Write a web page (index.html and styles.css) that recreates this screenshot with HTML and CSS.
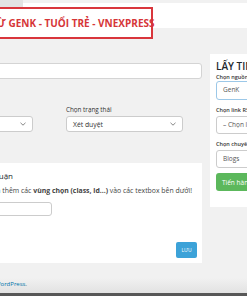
FILE: index.html
```html
<!DOCTYPE html>
<html lang="vi">
<head>
    <meta charset="UTF-8">
    <meta name="viewport" content="width=device-width, initial-scale=1.0">
    <title>Lấy tin tự động</title>
    <link rel="stylesheet" href="styles.css">
</head>
<body>
    <!-- Page title -->
    <div class="page-head">
        <div class="tab"></div>
        <h1 class="notice">LẤY TIN TỪ GENK - TUỔI TRẺ - VNEXPRESS</h1>
    </div>

    <div class="columns">
        <!-- Main column -->
        <div class="main-col">
            <input type="text" class="search-input">

            <div class="filters">
                <div class="filter">
                    <label>Chọn danh mục</label>
                    <div class="select-box">
                        <span>Tất cả</span>
                        <svg width="6" height="4" viewBox="0 0 6 4"><path d="M0.5 0.8 L3 3.2 L5.5 0.8" fill="none" stroke="#777" stroke-width="0.9"/></svg>
                    </div>
                </div>
                <div class="filter">
                    <label>Chọn trạng thái</label>
                    <div class="select-box">
                        <span>Xét duyệt</span>
                        <svg width="6" height="4" viewBox="0 0 6 4"><path d="M0.5 0.8 L3 3.2 L5.5 0.8" fill="none" stroke="#777" stroke-width="0.9"/></svg>
                    </div>
                </div>
            </div>

            <div class="card">
                <h3 class="card-title"><span>Cài đặt lấy bình luận</span></h3>
                <p class="card-hint"><span>Bạn có thể lấy nội dung bằng cách thêm các <b>vùng chọn (class, id...)</b> vào các textbox bên dưới!</span></p>
                <input type="text" class="small-input">
                <div class="card-actions">
                    <button class="save">LƯU</button>
                </div>
            </div>

            <p class="footer-text"><span>Cảm ơn bạn đã khởi tạo với <a href="#">WordPress</a>.</span></p>
        </div>

        <!-- Sidebar -->
        <div class="sidebar">
            <h2>LẤY TIN TỨC</h2>
            <label>Chọn nguồn tin</label>
            <div class="side-select active">GenK</div>
            <label>Chọn link RSS</label>
            <div class="side-select">– Chọn link RSS –</div>
            <label>Chọn chuyên mục</label>
            <div class="side-select">Blogs</div>
            <button class="go">Tiến hành lấy tin</button>
        </div>
    </div>
</body>
</html>
```

FILE: styles.css
```css
body {
    font-family: "Open Sans", Arial, sans-serif;
    margin: 0;
    width: 247px;
    height: 296px;
    overflow: hidden;
    color: #32373c;
    background: linear-gradient(to bottom, #f1f1f1 278px, #e2e2e2 293px, #575757 293px);
}
.page-head {
    display: flow-root;
    margin-top: 3px;
    height: 25px;
    background-color: #fff;
}
.tab {
    width: 23px;
    height: 12px;
    margin-top: -3px;
    background-color: #e3e3e3;
}
.notice {
    box-sizing: border-box;
    display: block;
    width: 213px;
    margin: -5px 0 0 -60px;
    padding: 0 0 0 8px;
    height: 32px;
    line-height: 28px;
    border: 2px solid #d9363c;
    background-color: #fff;
    color: #d63638;
    font-size: 10px;
    font-weight: 700;
    white-space: nowrap;
}
.columns {
    display: flex;
    align-items: flex-start;
    margin-top: 26px;
}
.main-col {
    flex-shrink: 0;
    width: 312px;
    margin-left: -110px;
    padding-top: 9px;
}
.search-input {
    display: block;
    box-sizing: border-box;
    width: 100%;
    height: 16px;
    margin: 0;
    border: 1px solid #d4d4d4;
    border-radius: 3px;
    background-color: #fff;
}
.filters {
    display: flex;
    gap: 33px;
    margin-top: 27px;
    padding-left: 26px;
}
.filter {
    width: 117px;
}
.filter label {
    display: block;
    font-size: 6.3px;
    line-height: 8px;
    color: #333;
}
.select-box {
    box-sizing: border-box;
    height: 16px;
    margin-top: 2px;
    padding: 0 6px;
    display: flex;
    align-items: center;
    justify-content: space-between;
    border: 1px solid #ccc;
    border-radius: 3px;
    background-color: #fff;
    font-size: 6.8px;
    color: #333;
}
.card {
    box-sizing: border-box;
    height: 100px;
    margin-top: 31px;
    padding: 7px 5px 5px 5px;
    background-color: #fff;
}
/* texts cut by the left edge: anchor them at their right end */
.card-title, .card-hint, .footer-text {
    display: flex;
    justify-content: flex-end;
    white-space: nowrap;
}
.card-title {
    width: 118px;
    margin: 0;
    font-size: 8px;
    line-height: 11px;
    font-weight: 400;
    color: #23282d;
}
.card-hint {
    width: 297px;
    margin: 5px 0 0;
    font-size: 6.9px;
    line-height: 9px;
    color: #444;
}
.small-input {
    display: block;
    box-sizing: border-box;
    width: 157px;
    height: 14px;
    margin: 7px 0 0;
    border: 1px solid #ccc;
    border-radius: 3px;
}
.card-actions {
    display: flex;
    justify-content: flex-end;
    margin-top: 26px;
}
.save {
    width: 21px;
    height: 16px;
    padding: 0;
    border: none;
    border-radius: 2px;
    background-color: #3ca2d8;
    color: #fff;
    font-family: "Open Sans", Arial, sans-serif;
    font-size: 5px;
}
.footer-text {
    width: 137px;
    margin: 17px 0 0 0;
    font-size: 6px;
    line-height: 8px;
    color: #555;
}
.footer-text a {
    color: #0073aa;
    text-decoration: none;
}
.sidebar {
    flex-shrink: 0;
    width: 100px;
    margin-left: 8px;
    padding: 6px 0 16px 6px;
    background-color: #fff;
}
.sidebar h2 {
    margin: 0;
    font-size: 10px;
    line-height: 12px;
    font-weight: 600;
    color: #23282d;
    white-space: nowrap;
}
.sidebar label {
    display: block;
    margin-top: 7px;
    font-size: 5.5px;
    line-height: 7px;
    font-weight: 600;
    color: #333;
    white-space: nowrap;
}
.sidebar h2 + label {
    margin-top: 2px;
}
.side-select {
    box-sizing: border-box;
    width: 90px;
    height: 18px;
    margin-top: 2px;
    padding-left: 6px;
    line-height: 16px;
    border: 1px solid #ccc;
    border-radius: 3px;
    font-size: 6.5px;
    color: #555;
    white-space: nowrap;
}
.side-select.active {
    height: 19px;
    margin-top: 0;
    border-color: #9cc8e8;
}
.go {
    display: block;
    width: 90px;
    height: 18px;
    margin-top: 5px;
    padding: 0 0 0 6px;
    text-align: left;
    border: none;
    border-radius: 3px;
    background-color: #5cb85c;
    color: #fff;
    font-family: "Open Sans", Arial, sans-serif;
    font-size: 6.5px;
    white-space: nowrap;
}
```
